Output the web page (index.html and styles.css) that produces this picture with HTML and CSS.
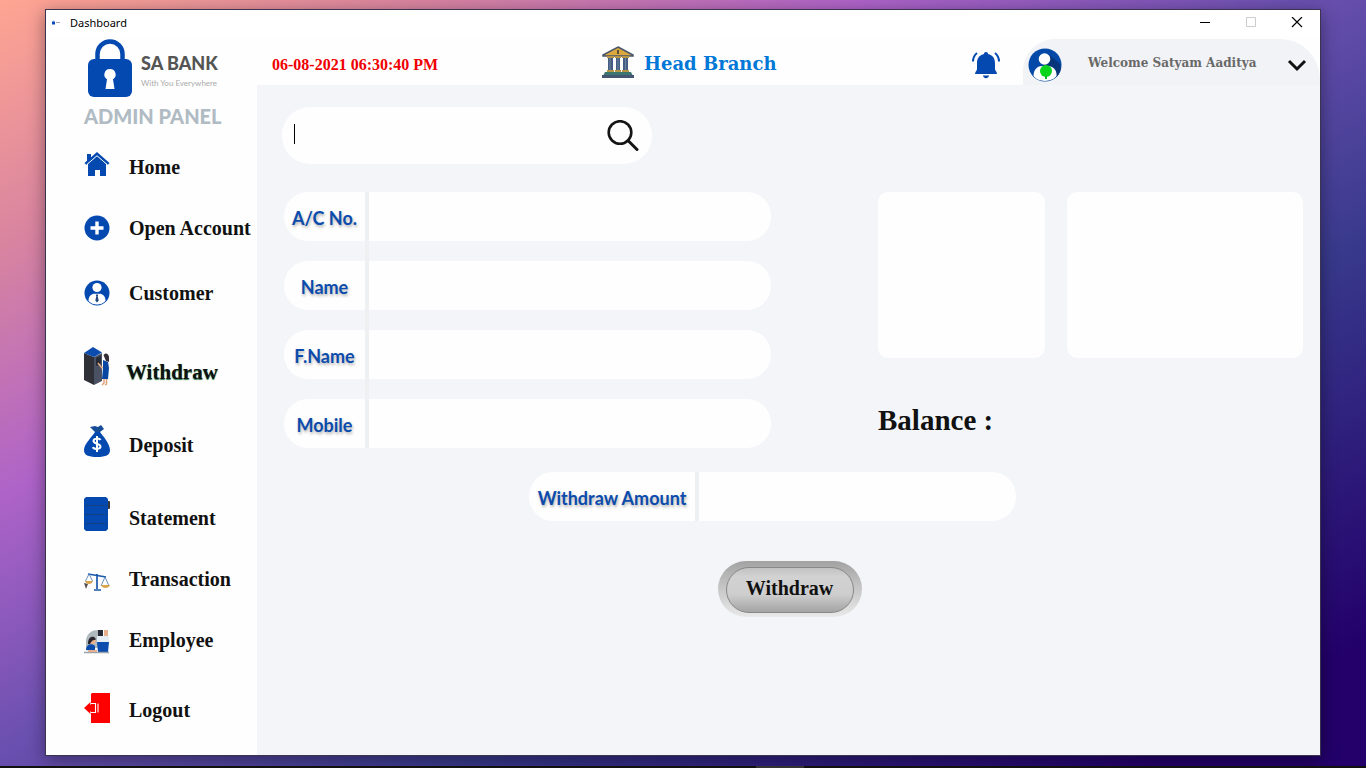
FILE: index.html
```html
<!DOCTYPE html>
<html lang="en">
<head>
<meta charset="utf-8">
<meta name="viewport" content="width=device-width, initial-scale=1">
<title>Dashboard</title>
<link rel="stylesheet" href="styles.css">
</head>
<body>
<div class="desktop">
  <div class="window">
    <div class="titlebar">
      <svg class="app-icon" viewBox="0 0 10 10" aria-hidden="true"><path d="M1 3.500h3v3H1z" fill="#0449b5"/><path d="M2 2.500h1v1H2z" fill="#6f9de0"/><path d="M5 4.500h4" stroke="#a5abb5"/></svg>
      <span class="window-title">Dashboard</span>
      <div class="window-controls">
        <button type="button" aria-label="Minimize"><svg viewBox="0 0 12 12"><path d="M1 5.500h10" stroke="#000"/></svg></button>
        <button type="button" aria-label="Maximize" disabled><svg viewBox="0 0 12 12"><path d="M1.500 .5h9v9h-9z" fill="none" stroke="#ccc"/></svg></button>
        <button type="button" aria-label="Close"><svg viewBox="0 0 12 12"><path d="M1 0l10 10M11 0L1 10" stroke="#000" stroke-width="1.200"/></svg></button>
      </div>
    </div>
    <div class="shell">
      <aside class="sidebar">
        <div class="brand">
          <svg class="brand-lock" viewBox="0 0 44 58" aria-hidden="true">
            <path d="M9.500 23V15a12.500 12.500 0 0 1 25 0v8" fill="none" stroke="#0449b0" stroke-width="4.500"/>
            <rect x="0" y="20" width="44" height="38" rx="6" fill="#0449b0"/>
            <path d="M22 30a5.500 5.500 0 0 0-3 10.200L17.500 50h9L25 40.200A5.500 5.500 0 0 0 22 30z" fill="#fff"/>
          </svg>
          <div class="brand-text">
            <span class="brand-name">SA BANK</span>
            <span class="brand-tag">With You Everywhere</span>
          </div>
        </div>
        <h1 class="panel-name">ADMIN PANEL</h1>
        <nav class="nav" aria-label="Main">
          <a class="nav-item" href="#home">
            <svg class="nav-icon" viewBox="0 0 26 44" aria-hidden="true"><g fill="#0449b0"><path d="M13 10.500L22 19v12h-6v-6h-5v6H4V19z"/><path d="M13 7l12.500 11-1.800 2L13 10.500 2.300 20 .5 18 3 15.800V9h4v3.300z"/></g><path d="M2.300 20L13 10.800 23.700 20" fill="none" stroke="#fff" stroke-width=".9"/></svg>
            <span>Home</span></a>
          <a class="nav-item gap-s" href="#open-account">
            <svg class="nav-icon" viewBox="0 0 26 44" aria-hidden="true"><circle cx="13" cy="22" r="12.500" fill="#0449b0"/><path d="M13 15.500v13M6.500 22h13" stroke="#fff" stroke-width="3.400"/></svg>
            <span>Open Account</span></a>
          <a class="nav-item gap-m" href="#customer">
            <svg class="nav-icon" viewBox="0 0 26 44" aria-hidden="true"><circle cx="13" cy="22" r="12.500" fill="#0449b0"/><circle cx="13" cy="16.500" r="4.600" fill="#fff"/><path d="M4.500 30c0-5 3-7.300 6-7.300h5c3 0 6 2.300 6 7.300a12 12 0 0 1-17 0z" fill="#fff"/><path d="M11.800 23.500h2.400l-.5 2 1 4-1.700 2-1.700-2 1-4z" fill="#23477f"/></svg>
            <span>Customer</span></a>
          <a class="nav-item gap-xl current" href="#withdraw" aria-current="page">
            <svg class="nav-icon" viewBox="0 0 26 44" aria-hidden="true"><path d="M0 3L10 7v28L0 30z" fill="#303138"/><path d="M10 7l8-4v28l-8 4z" fill="#4a5163"/><path d="M0 3l9-6L18 2.500 10 7z" fill="#0b4cae"/><path d="M12 8l5-2.500v8L12 16z" fill="#282c39"/><path d="M19.500 5c2-3 5-1.500 5.500 2v5l-3-1z" fill="#342c35"/><path d="M14 13l4 5 3-3" fill="none" stroke="#e8ad84" stroke-width="1.500"/><path d="M19 10l5 2 1 6-1 11h-6l1-11z" fill="#0747a2"/><path d="M20 29v4l-2 2M22.500 29v5l-1.500 1" fill="none" stroke="#e0a379" stroke-width="1.500"/></svg>
            <span>Withdraw</span></a>
          <a class="nav-item gap-l" href="#deposit">
            <svg class="nav-icon" viewBox="0 0 26 44" aria-hidden="true"><path d="M6 4l5-1 3 1 3-2 3 4-4 3h-5z" fill="#184d97"/><path d="M11 9h5c3 4 10 12 10 18 0 5-4 7-13 7S0 32 0 27C0 21 8 14 11 9z" fill="#0449b0"/><path d="M16.500 17c-1-2-7-2-7 1s7 2.500 7 5.500-7 3.200-7.500.5M13 13v16" fill="none" stroke="#fff" stroke-width="2"/></svg>
            <span>Deposit</span></a>
          <a class="nav-item gap-l" href="#statement">
            <svg class="nav-icon" viewBox="0 0 26 44" aria-hidden="true"><rect x="23" y="5" width="3" height="8" rx="1" fill="#35383d"/><path d="M2 1h20l2 2v30l-2 2H2l-2-2V3z" fill="#0449b0"/><path d="M1 9.500h22M1 18.500h22M1 27.500h22" stroke="#173d78" stroke-dasharray="3 1"/></svg>
            <span>Statement</span></a>
          <a class="nav-item gap-s" href="#transaction">
            <svg class="nav-icon" viewBox="0 0 26 44" aria-hidden="true"><path d="M4 17l18 3M13 17v15M10 33h7" fill="none" stroke="#1a58aa" stroke-width="1.700"/><path d="M5 17L1.500 24M5 17l3.500 7M21 20l-4 9M21 20l4 9" stroke="#5a83b8" stroke-width=".9"/><path d="M1 24h8c-1 4-7 4-8 0zM17 28h9c-1 4-8 4-9 0z" fill="#d9a44c"/><path d="M0 26l4 1-2 5z" fill="#554e50"/></svg>
            <span>Transaction</span></a>
          <a class="nav-item gap-s" href="#employee">
            <svg class="nav-icon" viewBox="0 0 26 44" aria-hidden="true"><path d="M2 30v-7c0-8 7-11 12-11h4v18z" fill="#aeb8bd"/><path d="M14 12h5v6h-5z" fill="#252a36"/><path d="M20 12h4v6h-4z" fill="#e7b18f"/><path d="M13 18h12v6H13z" fill="#e7edf4"/><path d="M13 24h12l-1 10H14z" fill="#0b4cae"/><circle cx="8.500" cy="23" r="3.200" fill="#e7b18f"/><path d="M4 26c0-6 3-8 6-7 2 1 2 3 1 3-3 0-3 1-5 4z" fill="#29242c"/><path d="M2 32c0-6 6-7 9-4v5z" fill="#0b4cae"/><path d="M0 34.500h25" stroke="#9aa3aa" stroke-width="1.500"/><path d="M4 33h9" stroke="#e7b18f" stroke-width="2"/></svg>
            <span>Employee</span></a>
          <a class="nav-item gap-n" href="#logout">
            <svg class="nav-icon" viewBox="0 0 26 44" aria-hidden="true"><path d="M8 5h18v30H7V25V15V6z" fill="#fe0000"/><path d="M0 20l6.500-6v3H11v6H6.500v3z" fill="#fe0000"/><path d="M6.500 15.500h5v9h-5M14 15.500v9" fill="none" stroke="#fff" stroke-width="1.100"/></svg>
            <span>Logout</span></a>
        </nav>
      </aside>
      <div class="content">
        <header class="topbar">
          <time class="clock" datetime="2021-08-06T18:30:40">06-08-2021 06:30:40 PM</time>
          <div class="branch">
            <svg viewBox="0 0 32 32" aria-hidden="true"><path d="M16 1L31 9v1H1V9z" fill="#dba840" stroke="#48566a" stroke-width="1.500"/><path d="M16 4v4" stroke="#5c5337" stroke-width="2"/><g fill="#445d80"><path d="M6 11h5v14H6zM14 11h4v14h-4zM21 11h5v14h-5z"/></g><path d="M8 12v12M16 12v12M23.500 12v12" stroke="#6a82a1"/><g fill="#b89443"><path d="M5 10h7v2H5zM13 10h6v2h-6zM20 10h7v2h-7zM5 24h7v2H5zM13 24h6v2h-6zM20 24h7v2h-7z"/></g><path d="M3 26h26l2 4H1z" fill="#3d766f"/><path d="M0 29h32v3H0z" fill="#445673"/></svg>
            <h2>Head Branch</h2>
          </div>
          <button class="bell" type="button" aria-label="Notifications">
            <svg viewBox="0 0 28 28"><path d="M14 1c1.300 0 2 .8 2 2 4.500 1 7 4 7 9v6c0 2 2 2.500 2 5H3c0-2.500 2-3 2-5v-6c0-5 2.500-8 7-9 0-1.200.7-2 2-2zM11 24.500h6c-.5 3.500-5.500 3.500-6 0z" fill="#0449b0"/><path d="M5 2C2.500 4 1 7 1 10.500M23 2c2.500 2 4 5 4 8.500" fill="none" stroke="#0449b0" stroke-width="2"/></svg>
          </button>
          <div class="account">
            <svg class="avatar" viewBox="0 0 34 34" aria-hidden="true"><circle cx="17" cy="17" r="16.500" fill="#0449a8"/><path d="M20 6l12 10c3 9-4 15-12 17l-8-9z" fill="#073579"/><circle cx="16.500" cy="11" r="5.800" fill="#fff"/><path d="M5.500 28C5.500 21 10 18 14 18h6c5 0 9 4 8.500 10-4 6-18 7-23 0z" fill="#fff"/><circle cx="18" cy="23" r="6" fill="#08d51c"/><path d="M17 28h2v3h-2z" fill="#08b92a"/></svg>
            <span class="welcome">Welcome Satyam Aaditya</span>
            <button class="account-menu" type="button" aria-label="Account menu"><svg viewBox="0 0 20 14"><path d="M2 3l8 8 8-8" fill="none" stroke="#111" stroke-width="3"/></svg></button>
          </div>
        </header>
        <main class="page">
          <form class="search" role="search">
            <span class="caret"></span>
            <input type="search" aria-label="Search account">
            <button type="button" aria-label="Search"><svg viewBox="0 0 32 32"><circle cx="13" cy="12.500" r="11.300" fill="none" stroke="#151515" stroke-width="2.600"/><path d="M21 20.500l9 9" stroke="#151515" stroke-width="3" stroke-linecap="round"/></svg></button>
          </form>
          <div class="details">
            <div class="fields">
              <div class="field"><label for="acno">A/C No.</label><input id="acno" type="text"></div>
              <div class="field"><label for="name">Name</label><input id="name" type="text"></div>
              <div class="field"><label for="fname">F.Name</label><input id="fname" type="text"></div>
              <div class="field"><label for="mobile">Mobile</label><input id="mobile" type="text"></div>
            </div>
            <div class="summary">
              <div class="cards"><div class="card"></div><div class="card"></div></div>
              <p class="balance">Balance :</p>
            </div>
          </div>
          <form class="withdrawal">
            <div class="field amount"><label for="amount">Withdraw Amount</label><input id="amount" type="text"></div>
            <button class="submit" type="button"><span>Withdraw</span></button>
          </form>
        </main>
      </div>
    </div>
  </div>
  <div class="taskbar"></div>
</div>
</body>
</html>
```
FILE: styles.css
```css
* { box-sizing: border-box; }
body { margin: 0; font-family: "Liberation Serif", serif; color: #111; }
button { border: 0; padding: 0; background: none; font: inherit; color: inherit; }
svg { display: block; }
input { border: 0; outline: 0; min-width: 0; background: #fefefe; font: 18px "Liberation Serif", serif; }
h1, h2, p { margin: 0; }

.desktop {
  min-height: 100vh;
  display: flex;
  flex-direction: column;
  background: linear-gradient(150deg, #ffa592 0%, #d884a0 16%, #ae63c8 32%, #6b50b0 48%, #38398c 66%, #23006a 92%, #23006a 100%);
}
.window {
  flex: 1;
  display: flex;
  flex-direction: column;
  margin: 9px 45px 10px;
  border: 1px solid #3b3350;
  background: #fefefe;
  box-shadow: 0 4px 16px rgba(0, 0, 0, .4);
}
.taskbar { height: 2px; background: linear-gradient(90deg, #111 756px, #333 756px 804px, #111 804px); }

.titlebar { display: flex; align-items: center; height: 26px; padding-left: 5px; background: #fff; }
.app-icon { width: 10px; height: 10px; }
.window-title { margin-left: 9px; padding-bottom: 2px; font: 11px "Noto Sans", sans-serif; color: #000; }
.window-controls { display: flex; margin-left: auto; }
.window-controls button { display: grid; place-items: center; width: 46px; height: 24px; }
.window-controls svg { width: 12px; height: 12px; }

.shell { flex: 1; display: flex; }
.sidebar { flex: none; width: 211px; background: #fefefe; }
.brand { display: flex; gap: 9px; padding: 3px 0 0 42px; }
.brand-lock { width: 44px; height: 58px; }
.brand-text { display: flex; flex-direction: column; padding-top: 12px; font-family: Lato, sans-serif; }
.brand-name { font-size: 18px; line-height: 24px; font-weight: 900; color: #555; }
.brand-tag { font-size: 8px; line-height: 16px; color: #aaa; }
.panel-name { padding: 7px 0 1px 38px; font: 900 20px/24px Lato, sans-serif; color: #b0bbc3; }
.nav { display: flex; flex-direction: column; padding: 16px 0 8px 38px; }
.nav-item { display: flex; align-items: center; gap: 19px; height: 44px; font-size: 20px; font-weight: 700; color: #111; text-decoration: none; white-space: nowrap; }
.nav-icon { width: 26px; height: 44px; overflow: visible; }
.gap-s { margin-top: 17px; }
.gap-m { margin-top: 21px; }
.gap-n { margin-top: 26px; }
.gap-l { margin-top: 29px; }
.gap-xl { margin-top: 35px; }
.current { gap: 16px; font-size: 21px; text-shadow: 0 1px 1px #2c7a46; }

.content { flex: 1; display: flex; flex-direction: column; min-width: 0; background: #f3f5f9; }
.topbar { display: grid; grid-template-columns: 330px 1fr 51px 297px; align-items: center; height: 49px; padding-left: 15px; background: #fefefe; }
.clock { font-size: 16px; font-weight: 700; color: #f00000; padding-top: 8px; }
.branch { display: flex; align-items: center; gap: 10px; padding-top: 2px; }
.branch svg { width: 32px; height: 32px; }
.branch h2 { padding-top: 4px; font: 700 18px "DejaVu Serif", serif; color: #0078d7; }
.bell { justify-self: start; padding-top: 8px; }
.bell svg { width: 28px; height: 28px; }
.account { display: flex; align-items: center; align-self: end; height: 46px; padding: 6px 13px 0 5px; border-radius: 32px 40px 0 0; background: #f1f3f6; }
.avatar { width: 34px; height: 34px; }
.welcome { margin-left: 26px; padding-bottom: 4px; font: 700 12px "DejaVu Serif", serif; color: #696969; white-space: nowrap; }
.account-menu { margin-left: auto; }
.account-menu svg { width: 20px; height: 14px; }

.page { flex: 1; padding: 22px 17px 24px 25px; }
.search { display: flex; align-items: center; width: 370px; height: 57px; padding: 0 13px 0 12px; border-radius: 28px; background: #fefefe; }
.caret { width: 1px; height: 20px; margin-bottom: 4px; background: #000; }
.search input { flex: 1; height: 40px; }
.search button svg { width: 32px; height: 32px; }
.details { display: grid; grid-template-columns: minmax(0, 487px) 425px; justify-content: space-between; margin-top: 28px; padding-left: 2px; }
.fields { display: grid; gap: 20px; background: linear-gradient(90deg, transparent 81px, #eff0f2 81px 85px, transparent 85px); }
.field { display: grid; grid-template-columns: 81px 1fr; column-gap: 4px; height: 49px; }
.field label { display: grid; place-items: center; padding-top: 3px; border-radius: 24px 0 0 24px; background: #fefefe; font: 700 18px Lato, sans-serif; color: #0b4bac; text-shadow: 1px 2px 3px rgba(0, 0, 0, .3); white-space: nowrap; }
.field input { border-radius: 0 24px 24px 0; padding: 0 16px; width: 100%; }
.cards { display: grid; grid-template-columns: 167fr 236fr; gap: 22px; }
.card { height: 166px; border-radius: 10px; background: #fefefe; }
.balance { margin-top: 46px; font-size: 29px; line-height: 32px; font-weight: 700; }
.withdrawal { display: flex; flex-direction: column; align-items: center; gap: 40px; margin-top: 24px; padding-right: 6px; }
.amount { grid-template-columns: 166px 1fr; width: 487px; margin-right: 34px; background: linear-gradient(90deg, transparent 166px, #eff0f2 166px 170px, transparent 170px); }
.submit { width: 144px; height: 56px; padding: 6px 8px 4px; border-radius: 28px; background: linear-gradient(#a2a2a2, #c4c4c4 45%, #e9e9e9); }
.submit span { display: grid; place-items: center; height: 100%; padding-bottom: 4px; border: 1px solid #888; border-radius: 24px; background: linear-gradient(#c2c2c2, #d2d2d2 20%, #cecece 60%, #a4a4a4); font-size: 20px; font-weight: 700; }
```
